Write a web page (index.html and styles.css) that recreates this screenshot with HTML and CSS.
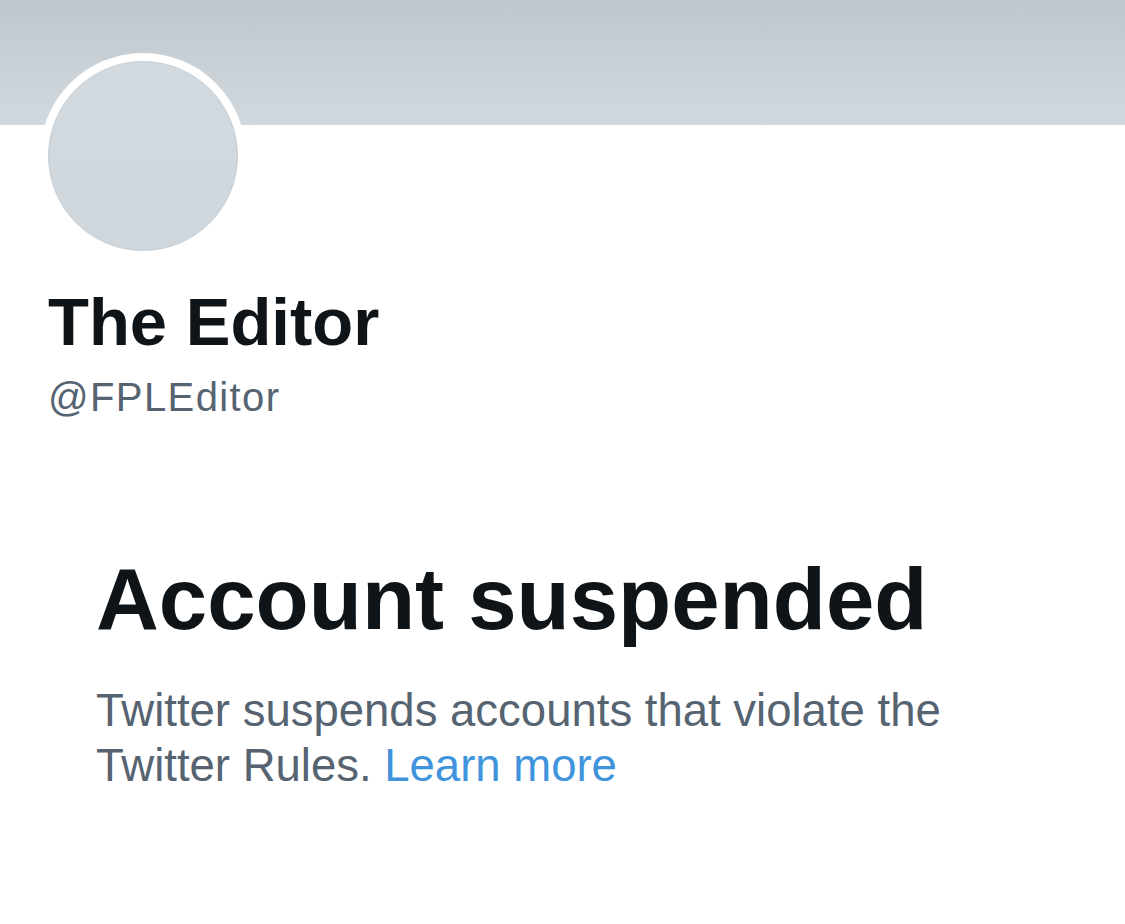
FILE: index.html
```html
<!DOCTYPE html>
<html lang="en">
<head>
<meta charset="utf-8">
<title>The Editor (@FPLEditor)</title>
<link rel="stylesheet" href="styles.css">
</head>
<body>
<div class="banner"></div>
<section class="profile">
  <div class="avatar-ring"><div class="avatar"></div></div>
  <h1 class="name">The Editor</h1>
  <div class="handle">@FPLEditor</div>
</section>
<section class="notice">
  <h2 class="notice-title">Account suspended</h2>
  <p class="notice-text">Twitter suspends accounts that violate the<br>Twitter Rules. <a class="link" href="#">Learn more</a></p>
</section>
</body>
</html>
```
FILE: styles.css
```css
html, body {
  margin: 0;
  padding: 0;
  background: #ffffff;
}
body {
  width: 1125px;
  height: 924px;
  overflow: hidden;
  font-family: "Liberation Sans", Arial, sans-serif;
  color: #0f1419;
}
.banner {
  height: 125px;
  background: linear-gradient(180deg, #bec7ce 0%, #d2d9de 100%);
}
.profile {
  padding-left: 40px;
}
.avatar-ring {
  width: 190px;
  height: 190px;
  padding: 8px;
  margin-top: -72px;
  border-radius: 50%;
  background: #ffffff;
}
.avatar {
  width: 188px;
  height: 188px;
  border-radius: 50%;
  border: 1px solid #c6ced4;
  background: linear-gradient(180deg, #d2d9df 0%, #cfd7dd 100%);
}
.name {
  margin: 30px 0 0 8px;
  font-size: 67px;
  line-height: 66px;
  font-weight: 700;
  color: #0f1419;
}
.handle {
  margin: 22px 0 0 8px;
  font-size: 40px;
  line-height: 40px;
  letter-spacing: 1.4px;
  color: #566370;
}
.notice {
  padding-left: 96px;
  padding-right: 60px;
}
.notice-title {
  margin: 138px 0 0 0;
  font-size: 87px;
  line-height: 87px;
  font-weight: 700;
  color: #0f1419;
}
.notice-text {
  margin: 41px 0 0 0;
  font-size: 45.5px;
  line-height: 55px;
  color: #566370;
}
.link {
  color: #3f94dc;
  text-decoration: none;
}
```
